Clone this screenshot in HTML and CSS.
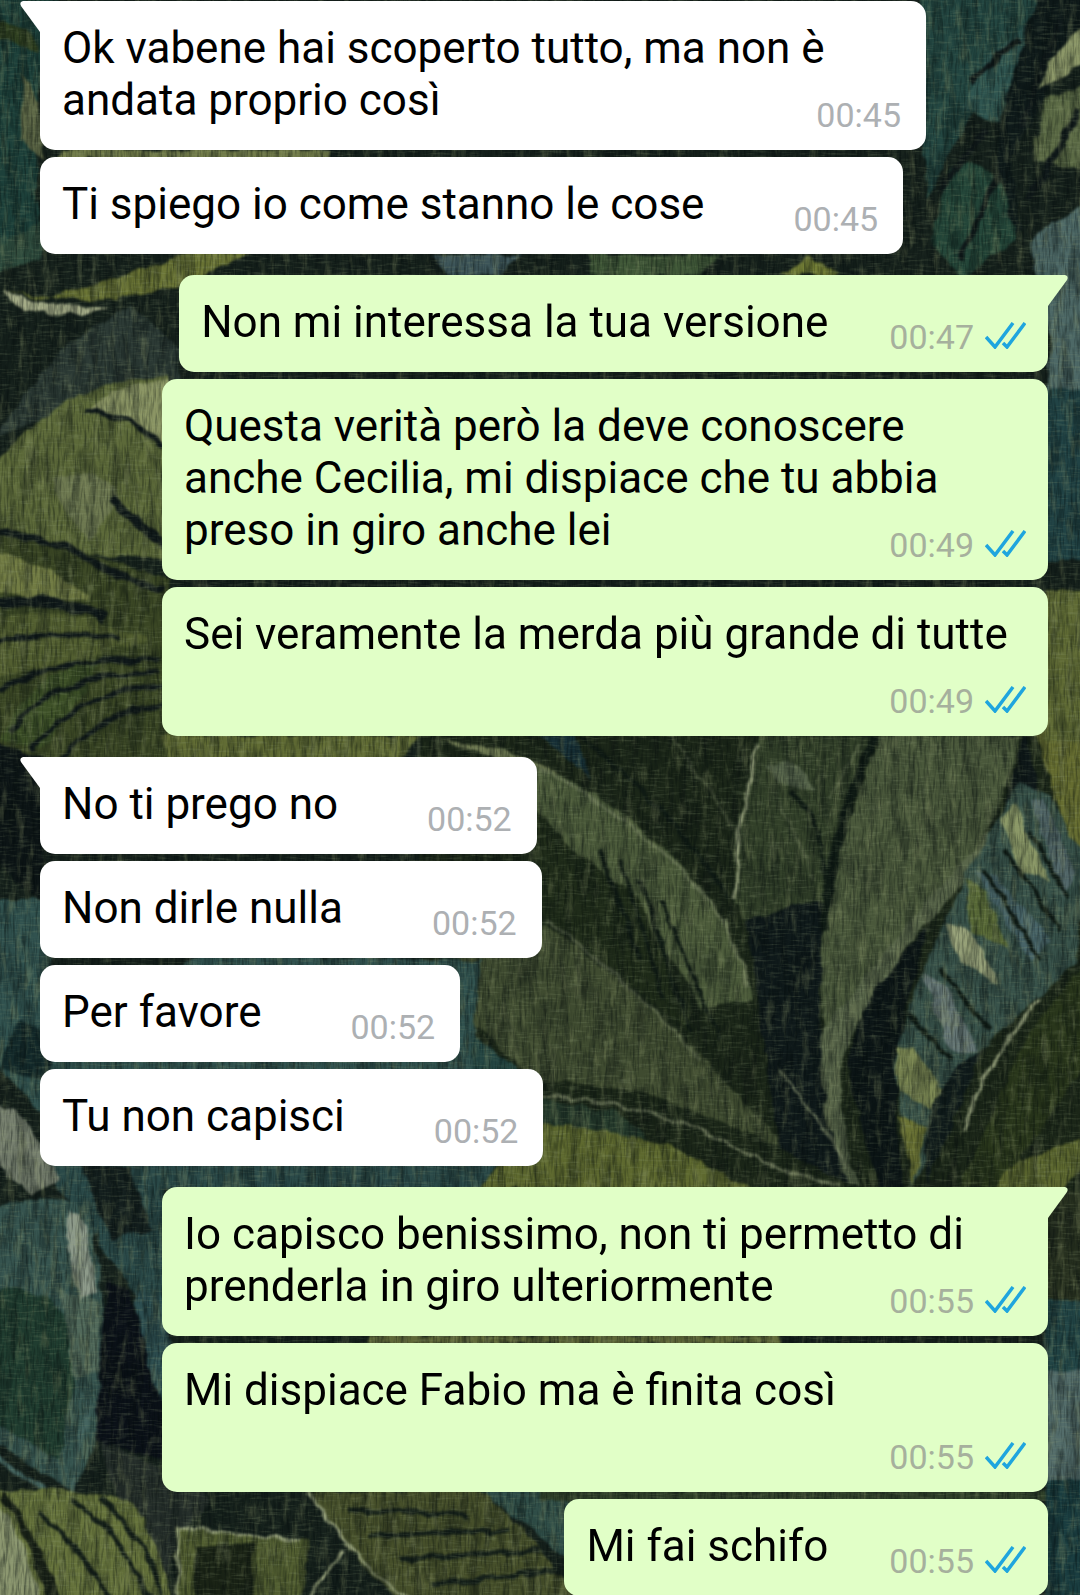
FILE: index.html
```
<!DOCTYPE html>
<html lang="it">
<head>
  <meta charset="UTF-8">
  <meta name="viewport" content="width=device-width, initial-scale=1">
  <title>Chat</title>
  <link rel="stylesheet" href="styles.css">
</head>
<body>

<!-- painted leaves wallpaper -->
<svg class="wallpaper" viewBox="0 0 1080 1595" preserveAspectRatio="xMidYMid slice" color-interpolation-filters="sRGB" aria-hidden="true">
  <defs>
    <filter id="brush" x="-5%" y="-5%" width="110%" height="110%">
      <feTurbulence type="fractalNoise" baseFrequency="0.05" numOctaves="4" seed="4" result="n"/>
      <feDisplacementMap in="SourceGraphic" in2="n" scale="10" xChannelSelector="R" yChannelSelector="G"/>
      <feGaussianBlur stdDeviation="1"/>
    </filter>
    <filter id="light" x="0" y="0" width="100%" height="100%">
      <feTurbulence type="fractalNoise" baseFrequency="0.12 0.03" numOctaves="4" seed="7"/>
      <feColorMatrix values="0 0 0 0 .56  0 0 0 0 .6  0 0 0 0 .42  4 0 0 0 -2.1"/>
    </filter>
    <filter id="dark" x="0" y="0" width="100%" height="100%">
      <feTurbulence type="fractalNoise" baseFrequency="0.1 0.02" numOctaves="4" seed="12"/>
      <feColorMatrix values="0 0 0 0 .03  0 0 0 0 .06  0 0 0 0 .06  4 0 0 0 -1.8"/>
    </filter>
    <filter id="weaveX" x="0" y="0" width="100%" height="100%">
      <feTurbulence type="fractalNoise" baseFrequency="0.06 0.45" numOctaves="2" seed="3"/>
      <feColorMatrix values="0 0 0 0 .6  0 0 0 0 .66  0 0 0 0 .5  3 0 0 0 -1.5"/>
    </filter>
    <filter id="weaveY" x="0" y="0" width="100%" height="100%">
      <feTurbulence type="fractalNoise" baseFrequency="0.45 0.06" numOctaves="2" seed="9"/>
      <feColorMatrix values="0 0 0 0 0  0 0 0 0 .03  0 0 0 0 .03  3 0 0 0 -1.3"/>
    </filter>
  </defs>
  <rect width="1080" height="1595" fill="#16211c"/>
  <g filter="url(#brush)">
    <!-- top -->
    <path fill="#1d403a" d="M-10-10H60L34 120 40 250-10 270Z"/>
    <path fill="#5a6444" d="M24 70Q44 110 46 160L20 140Z"/>
    <path fill="#2f4020" d="M-10 20 30 30 40 50 0 40Z"/>
    <path fill="#707a48" d="M60 150H330V160H60Z"/>
    <path fill="#234641" d="M920-10H1050L985 90 925 200Z"/>
    <path fill="#2f5550" d="M985 60 1035 20 1020 130 960 110Z"/>
    <path fill="#0f1a1a" d="M1040-10H1090V20L1010 160 1020 230 990 250 1000 120Z"/>
    <path fill="#8c9768" d="M1090 20 1050 60 1040 90 1090 60Z"/>
    <path fill="#5b6a45" d="M1090 80 1045 100 1032 160 1090 170Z"/>
    <path fill="#244639" d="M950 170Q1000 140 1015 240L960 280 930 240Z"/>
    <path fill="#4d6866" d="M1090 200 1030 240 1050 330 1045 400H1090Z"/>
    <path fill="#214345" d="M1045 390H1090V560H1045Z"/>
    <path fill="#2f4c3e" d="M-10 250 60 210 40 260-10 275Z"/>
    <path fill="#6b7535" d="M5 290Q100 312 180 285 230 265 250 252L190 250Q120 280 40 300Z"/>
    <path fill="#a5ac88" d="M3 288Q18 300 50 304L110 308Q60 322 25 308Q6 302 3 288Z"/>
    <path fill="#405838" d="M590 255H720L700 276H590Z"/>
    <path fill="#727d35" d="M780 276 810 256 840 276Z"/>
    <path fill="#3d5559" d="M430 255H520L500 276H450Z"/>
    <path fill="#2c3a35" d="M-10 440 60 350 130 305 180 350V380L90 400Z"/>
    <path fill="none" stroke="#10191a" stroke-width="6" d="M985 130 940 190M1060 20 1020 130M1080 110 1030 200M1000 170 960 260M1020 40 970 80"/>

    <!-- left, behind the sent messages -->
    <path fill="#5c6939" d="M-10 470Q60 380 170 375V560L60 550-10 530Z"/>
    <path fill="#8b9564" d="M85 412Q120 380 170 380V450Q130 410 85 412Z"/>
    <path fill="#6d7850" d="M50 480Q100 460 120 500L90 540Q60 510 50 480Z"/>
    <path fill="#3a4624" d="M-10 530Q90 550 170 580V760H-10Z"/>
    <path fill="#717b43" d="M-10 550Q50 560 90 600L30 596-10 590Z"/>
    <path fill="#525e30" d="M-10 620Q60 600 150 640L80 660-10 680Z"/>
    <path fill="#3d5027" d="M0 740Q30 670 100 660L80 700 40 750Z"/>
    <path fill="#616c34" d="M160 735H420L400 760H170Z"/>
    <g fill="none" stroke="#10191a" stroke-width="9">
      <path d="M110 498 165 545"/>
      <path d="M85 412Q130 412 165 448" stroke-width="5"/>
      <path d="M-5 532Q60 540 95 562T165 590" stroke-width="7"/>
      <path d="M-5 604Q60 596 105 618" stroke-width="11"/>
      <path d="M-5 642Q60 630 120 638M0 690Q60 655 160 660M30 750Q80 690 165 685M10 730Q60 670 160 672M60 760Q100 710 165 705" stroke-width="5"/>
    </g>
    <path fill="#0d1516" d="M-10 740 50 760 40 900-10 860Z"/>

    <!-- middle -->
    <path fill="#1b2618" d="M420 735H1090V1190H420Z"/>
    <path fill="#6f7a52" d="M440 740Q520 748 560 775L538 770Z"/>
    <path fill="#173037" d="M540 735H575L592 778Z"/>
    <path fill="#4b5a3a" d="M530 763Q603 790 669 853 740 920 750 1000L700 1010Q660 920 600 905L535 860Z"/>
    <path fill="#1f2b19" d="M535 810Q580 860 640 900L700 1040 600 960 535 910Z"/>
    <path fill="#3f4b30" d="M450 950 545 925Q624 980 693 1047L790 1150 640 1090 535 1080 460 1010Z"/>
    <path fill="#244542" d="M440 1020 480 1040 520 1070H440Z"/>
    <path fill="#253a2c" d="M540 1098 620 1112 650 1140 540 1124Z"/>
    <path fill="#5e692f" d="M530 1124Q640 1130 700 1160L750 1190H480Z"/>
    <path fill="#324029" d="M758 735H873Q845 800 836 850L815 925 752 935 734 897Q728 830 758 735Z"/>
    <path fill="#55634a" d="M765 765Q800 750 815 790L780 785Z"/>
    <path fill="#0f191a" d="M745 920 822 900 820 1030 850 1185 780 1150Z"/>
    <path fill="#4a583b" d="M880 735H1020Q1010 790 987 830 960 900 860 980L828 1060Q814 960 828 880Z"/>
    <path fill="#59664a" d="M822 1030Q900 930 990 830L975 870Q870 980 842 1060 836 1120 860 1185H850Q815 1110 822 1030Z"/>
    <path fill="#0c1516" d="M930 925Q845 1010 848 1080L880 1190H905Q880 1060 930 925Z"/>
    <path fill="#0f1819" d="M1025 730 1040 790 1005 810Z"/>
    <path fill="#656c30" d="M1035 730H1090V880L1055 800Z"/>
    <path fill="#38524a" d="M1020 783 1052 797 1085 863 1077 963 983 1047 913 1187 893 1060 922 970 967 873 999 817Z"/>
    <path fill="#8b9867" d="M1000 820 1015 805 1050 880 1020 870Z"/>
    <path fill="#54696b" d="M1030 800 1045 800 1075 870 1065 900Z"/>
    <path fill="#5a6b38" d="M965 880 985 890 1010 950 970 930Z"/>
    <path fill="#486468" d="M975 870 995 875 1050 940 1030 960Z"/>
    <path fill="#98a27a" d="M945 925 970 930 1000 985 960 960Z"/>
    <path fill="#667776" d="M922 975 945 985 978 1050 950 1050Z"/>
    <path fill="#7d8954" d="M895 1045 915 1050 950 1100 930 1110 898 1090Z"/>
    <path fill="#6a7234" d="M898 1115 928 1130 914 1185Z"/>
    <path fill="#101b1b" d="M955 1070 985 1045 950 1130 925 1187 930 1110Z"/>
    <path fill="#29361b" d="M1090 960 1030 1030 960 1187H1000L1090 1060Z"/>
    <path fill="#5c672f" d="M1090 1135 1020 1160 990 1190H1060L1090 1165Z"/>
    <g fill="none" stroke="#8a9472" stroke-width="3">
      <path d="M540 768Q603 800 669 858T746 985" opacity=".5"/>
      <path d="M758 745Q735 820 736 900" stroke-width="4"/>
      <path d="M1040 1000Q985 1060 962 1130" stroke-width="4"/>
      <path d="M850 1170Q820 1120 780 1070M540 1096Q640 1100 720 1140T840 1185" opacity=".7"/>
      <path d="M545 920Q630 980 700 1060" opacity=".4"/>
      <path d="M670 735 735 830M860 745 830 800M780 800 815 880" opacity=".3"/>
    </g>
    <g fill="none" stroke="#0f1a14" stroke-width="4">
      <path d="M600 850 640 960M620 860 665 1000M640 880 690 1030M660 900 720 1040M580 735Q680 820 730 900M790 790Q830 830 825 900M985 870 1040 960M1005 850 1060 930M940 970 990 1030M1030 830 1070 900M905 1010 950 1060"/>
      <path d="M875 735Q830 840 824 930" stroke-width="9"/>
    </g>

    <!-- left, behind the received messages -->
    <path fill="#31524f" d="M-10 900H50V1060L200 955 480 960 470 1080 40 1110-10 1060Z"/>
    <path fill="#142a2b" d="M20 1020 60 1040 45 1080 0 1070Z"/>
    <path fill="#2a4948" d="M40 1160H500L480 1190H165V1340L120 1270Z"/>
    <path fill="#141f1e" d="M80 1165H130L150 1230 110 1240Z"/>
    <path fill="#77806f" d="M-10 1105Q20 1100 36 1140L60 1180 30 1195-10 1160Z"/>
    <path fill="#36544f" d="M-10 1210Q40 1190 85 1205 105 1260 103 1360T70 1490L-10 1440Z"/>
    <path fill="#203d30" d="M-10 1290Q50 1280 80 1340L60 1460-10 1420Z"/>
    <path fill="#50685a" d="M60 1290 98 1300 100 1370 75 1380Z"/>
    <path fill="#8d9a8a" d="M68 1212Q90 1215 88 1245L98 1290 80 1300 66 1250Z"/>
    <path fill="#0b1118" d="M106 1280 130 1290 165 1400V1460L95 1440Z"/>
    <path fill="#2e4f51" d="M135 1290 170 1300V1420Q145 1370 135 1290Z"/>
    <path fill="#262f2b" d="M100 1440 165 1470 210 1500 180 1540 160 1600 130 1540Z"/>
    <path fill="none" stroke="#456560" stroke-width="5" d="M-5 1455 65 1505M88 1400 70 1495"/>

    <!-- bottom -->
    <path fill="#66733c" d="M-10 1490 60 1490 130 1500Q160 1540 172 1600H-10Z"/>
    <path fill="#8c9770" d="M-10 1500Q20 1520 40 1600H-10Z"/>
    <path fill="#182016" d="M5 1490Q40 1540 60 1600H45Q30 1530 0 1500Z"/>
    <path fill="#515d30" d="M176 1527 310 1540 300 1600H176Z"/>
    <path fill="#1b2416" d="M195 1545 255 1545 250 1600H195Z"/>
    <path fill="#464f2a" d="M312 1490H480Q540 1540 580 1600H400Q340 1550 312 1490Z"/>
    <path fill="#2f4d47" d="M480 1490H570V1560Z"/>
    <g fill="none" stroke="#15201a" stroke-width="5">
      <path d="M350 1510 470 1515M370 1535 510 1530M400 1560 540 1550M430 1585 560 1570M70 1500Q120 1530 150 1600M100 1498Q150 1540 162 1600M40 1510Q90 1560 110 1600"/>
    </g>
    <path fill="none" stroke="#98a27c" stroke-width="3" d="M310 1490Q340 1550 410 1600M345 1550 305 1600M178 1600V1528L300 1540"/>
    <path fill="#30412a" d="M540 1490H1048V1501H540Z"/>
    <path fill="#5f6838" d="M370 1335H780V1344H370Z"/>

    <!-- right edge -->
    <path fill="#5f6a34" d="M1045 590H1090V740H1045Z"/>
    <path fill="#27301f" d="M1045 1190H1090V1300H1045Z"/>
    <path fill="#224546" d="M1045 1300H1090V1370H1045Z"/>
    <path fill="#536c6a" d="M1045 1370H1090V1480H1045Z"/>
    <path fill="#1a3d40" d="M1045 1480H1090V1600H1045Z"/>
  </g>
  <rect width="1080" height="1595" filter="url(#dark)" opacity=".3"/>
  <rect width="1080" height="1595" filter="url(#light)" opacity=".25"/>
  <rect width="1080" height="1595" filter="url(#weaveX)" opacity=".2"/>
  <rect width="1080" height="1595" filter="url(#weaveY)" opacity=".3"/>
</svg>

<svg class="defs" aria-hidden="true">
  <symbol id="ticks" viewBox="0 0 41 27">
    <path d="M1 15L10 25L28 1M18 21L22 25L40 1" fill="none" stroke="#1fa5de" stroke-width="3.5"/>
  </symbol>
</svg>

<main class="chat">
  <div class="group in">
    <div class="bubble">Ok vabene hai scoperto tutto, ma non è andata proprio così<span class="meta"><time>00:45</time></span></div>
    <div class="bubble">Ti spiego io come stanno le cose<span class="meta"><time>00:45</time></span></div>
  </div>

  <div class="group out">
    <div class="bubble">Non mi interessa la tua versione<span class="meta"><time>00:47</time><svg class="ticks"><use href="#ticks"/></svg></span></div>
    <div class="bubble">Questa verità però la deve conoscere anche Cecilia, mi dispiace che tu abbia preso in giro anche lei<span class="meta"><time>00:49</time><svg class="ticks"><use href="#ticks"/></svg></span></div>
    <div class="bubble">Sei veramente la merda più grande di tutte<span class="meta"><time>00:49</time><svg class="ticks"><use href="#ticks"/></svg></span></div>
  </div>

  <div class="group in">
    <div class="bubble">No ti prego no<span class="meta"><time>00:52</time></span></div>
    <div class="bubble">Non dirle nulla<span class="meta"><time>00:52</time></span></div>
    <div class="bubble">Per favore<span class="meta"><time>00:52</time></span></div>
    <div class="bubble">Tu non capisci<span class="meta"><time>00:52</time></span></div>
  </div>

  <div class="group out">
    <div class="bubble">Io capisco benissimo, non ti permetto di prenderla in giro ulteriormente<span class="meta"><time>00:55</time><svg class="ticks"><use href="#ticks"/></svg></span></div>
    <div class="bubble">Mi dispiace Fabio ma è finita così<span class="meta"><time>00:55</time><svg class="ticks"><use href="#ticks"/></svg></span></div>
    <div class="bubble">Mi fai schifo<span class="meta"><time>00:55</time><svg class="ticks"><use href="#ticks"/></svg></span></div>
  </div>
</main>

</body>
</html>
```
FILE: styles.css
```
* {
  box-sizing: border-box;
}
body {
  margin: 0;
  background: #16211c;
  font-family: Roboto, "Liberation Sans", sans-serif;
  color: #000;
}
.wallpaper {
  position: fixed;
  inset: 0;
  width: 100%;
  height: 100%;
  z-index: -1;
}
.defs {
  display: none;
}
.chat {
  height: 100vh;
  overflow: hidden;
  display: flex;
  flex-direction: column;
  gap: 21px;
  padding: 1px 32px 0 40px;
}
.group {
  flex-shrink: 0;
  display: flex;
  flex-direction: column;
  gap: 7px;
}
.in {
  align-items: flex-start;
}
.out {
  align-items: flex-end;
}
.bubble {
  position: relative;
  display: flow-root;
  max-width: calc(100% - 122px);
  padding: 21px 22px 24px;
  border-radius: 15px;
  font-size: 44px;
  line-height: 52px;
}
.in .bubble {
  background: #fff;
}
.out .bubble {
  background: #e1ffc7;
}

/* tails on the first message of each group */
.in .bubble:first-child {
  border-top-left-radius: 0;
}
.out .bubble:first-child {
  border-top-right-radius: 0;
}
.bubble:first-child::before {
  content: "";
  position: absolute;
  top: 0;
  width: 21px;
  height: 32px;
  background: inherit;
}
.in .bubble:first-child::before {
  left: -20px;
  clip-path: path("M21 0H3Q-1 1 1 5L20 31H21Z");
}
.out .bubble:first-child::before {
  right: -20px;
  clip-path: path("M0 0H18Q22 1 20 5L1 31H0Z");
}

/* time sits beside the last line, or drops below when it does not fit */
.meta {
  float: right;
  display: flex;
  align-items: baseline;
  gap: 11px;
  margin: 21px 0 -9px 61px;
  font-size: 34px;
  line-height: 40px;
  color: #a6b09d;
}
.in .meta {
  margin-left: 89px;
  padding-right: 3px;
  color: #adb0b3;
}
.ticks {
  width: 41px;
  height: 27px;
}
```
